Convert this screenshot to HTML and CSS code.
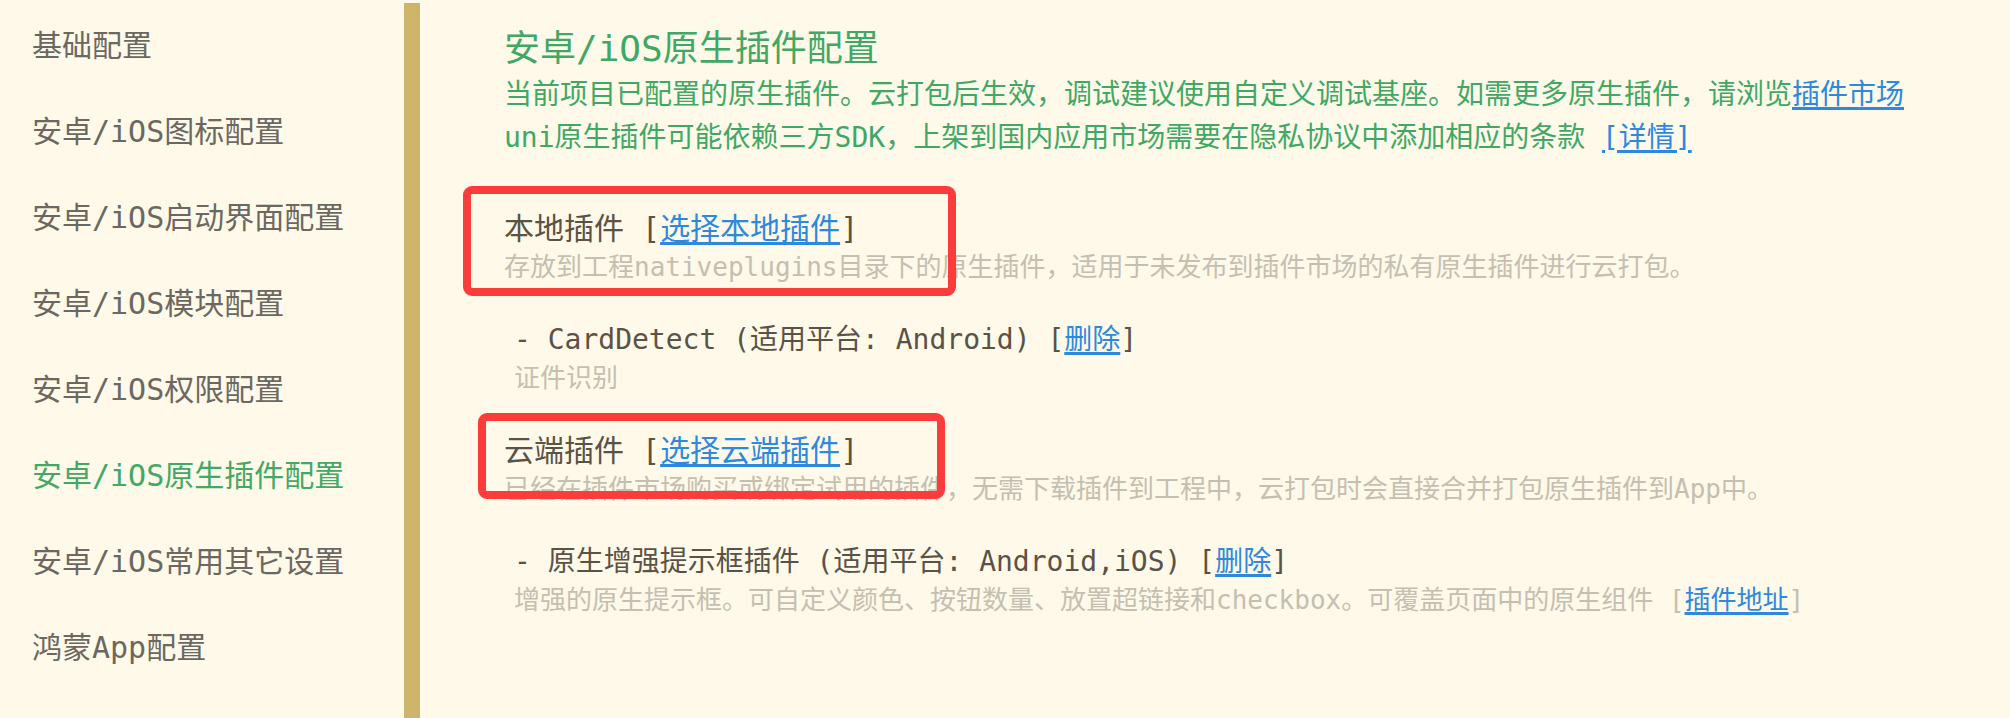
FILE: index.html
```html
<!DOCTYPE html>
<html lang="zh-CN">
<head>
<meta charset="utf-8">
<title>安卓/iOS原生插件配置</title>
<link rel="stylesheet" href="styles.css">
</head>
<body>
<div class="page">
  <nav class="sidebar">
    <div class="nav-item">基础配置</div>
    <div class="nav-item">安卓/iOS图标配置</div>
    <div class="nav-item">安卓/iOS启动界面配置</div>
    <div class="nav-item">安卓/iOS模块配置</div>
    <div class="nav-item">安卓/iOS权限配置</div>
    <div class="nav-item active">安卓/iOS原生插件配置</div>
    <div class="nav-item">安卓/iOS常用其它设置</div>
    <div class="nav-item">鸿蒙App配置</div>
  </nav>
  <div class="divider"></div>
  <main class="main">
    <h1 class="title">安卓/iOS原生插件配置</h1>
    <div class="intro">
      <p class="intro-line">当前项目已配置的原生插件。云打包后生效，调试建议使用自定义调试基座。如需更多原生插件，请浏览<a class="link" href="#">插件市场</a></p>
      <p class="intro-line">uni原生插件可能依赖三方SDK，上架到国内应用市场需要在隐私协议中添加相应的条款 <a class="link" href="#">[详情]</a></p>
    </div>

    <section class="block group group-first">
      <div class="group-head">本地插件 [<a class="link" href="#">选择本地插件</a>]</div>
      <div class="block-desc">存放到工程nativeplugins目录下的原生插件，适用于未发布到插件市场的私有原生插件进行云打包。</div>
      <span class="highlight highlight-local"></span>
    </section>

    <section class="block plugin">
      <div class="plugin-head">- CardDetect (适用平台: Android) [<a class="link" href="#">删除</a>]</div>
      <div class="block-desc">证件识别</div>
    </section>

    <section class="block group">
      <div class="group-head">云端插件 [<a class="link" href="#">选择云端插件</a>]</div>
      <div class="block-desc">已经在插件市场购买或绑定试用的插件，无需下载插件到工程中，云打包时会直接合并打包原生插件到App中。</div>
      <span class="highlight highlight-cloud"></span>
    </section>

    <section class="block plugin">
      <div class="plugin-head">- 原生增强提示框插件 (适用平台: Android,iOS) [<a class="link" href="#">删除</a>]</div>
      <div class="block-desc">增强的原生提示框。可自定义颜色、按钮数量、放置超链接和checkbox。可覆盖页面中的原生组件 [<a class="link" href="#">插件地址</a>]</div>
    </section>
  </main>
</div>
</body>
</html>
```

FILE: styles.css
```css
* {
  box-sizing: border-box;
}

html,
body {
  margin: 0;
  padding: 0;
}

body {
  background: #fef9e8;
  font-family: "DejaVu Sans Mono", "Noto Sans CJK SC", monospace;
  color: #5a5246;
}

.page {
  display: flex;
  min-height: 100vh;
}

/* ---------- sidebar ---------- */
.sidebar {
  width: 404px;
  flex: none;
  padding-top: 3px;
}

.nav-item {
  font-size: 30px;
  line-height: 42px;
  padding: 22px 0 22px 32px;
  color: #6b6862;
  white-space: nowrap;
}

.nav-item.active {
  color: #42a866;
}

.divider {
  width: 18px;
  flex: none;
  margin-top: 3px;
  background: #cfb56a;
  border-right: 2px solid #fffcf1;
}

/* ---------- main ---------- */
.main {
  flex: 1;
  padding: 25px 0 0 82px;
  white-space: nowrap;
}

.title {
  margin: 0;
  font-size: 36px;
  line-height: 48px;
  font-weight: normal;
  color: #40a865;
}

.intro-line {
  margin: 0;
  font-size: 28px;
  line-height: 43px;
  color: #40a865;
}

.link {
  color: #2d89de;
  text-decoration: underline;
  text-decoration-thickness: 3px;
  text-underline-offset: 3px;
}

.block {
  margin-top: 35px;
}

.group {
  position: relative;
}

.group-first {
  margin-top: 50px;
}

.group-head {
  font-size: 30px;
  line-height: 40px;
  color: #5a5246;
}

.plugin {
  padding-left: 10px;
}

.plugin-head {
  font-size: 28px;
  line-height: 40px;
  color: #5a5246;
}

.block-desc {
  font-size: 26px;
  line-height: 36px;
  color: #c5bfb1;
}

/* red annotation boxes drawn over the content */
.highlight {
  position: absolute;
  border: 8px solid #fc3b3b;
  border-radius: 9px;
  pointer-events: none;
}

.highlight-local {
  left: -41px;
  top: -23px;
  width: 493px;
  height: 110px;
}

.highlight-cloud {
  left: -26px;
  top: -18px;
  width: 467px;
  height: 86px;
}
```
